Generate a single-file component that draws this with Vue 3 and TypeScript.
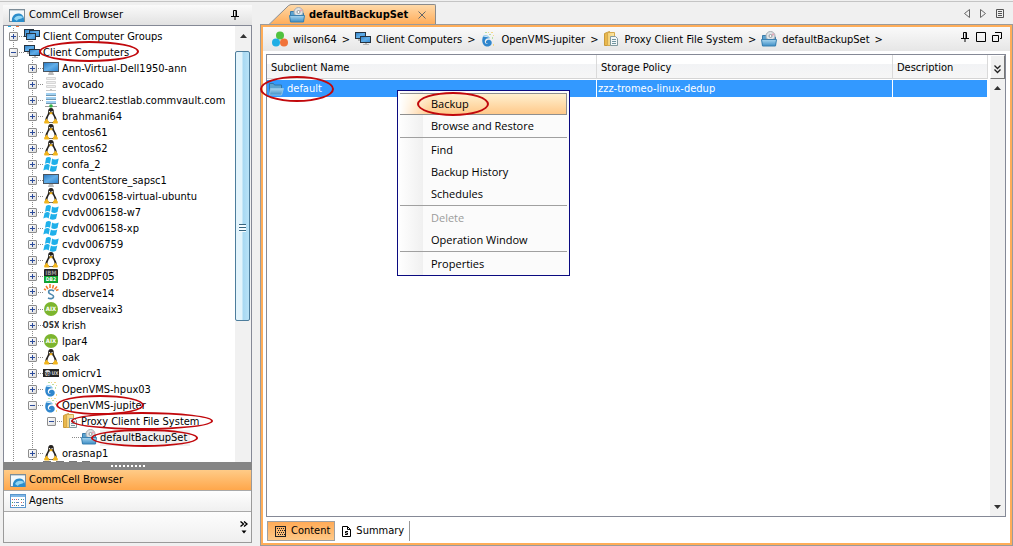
<script setup lang="ts">
import { computed, ref } from 'vue'

interface Ring {
  left: number
  top: number
  width: number
  height: number
}

interface TreeNode {
  label: string
  icon: string
  level: number
  expanded?: boolean
  leaf?: boolean
  tall?: boolean
  selected?: boolean
  ring?: Ring
}

interface BadgeText {
  text: string
  x: number
  y: number
  size: number
  fill: string
}

const nodes = ref<TreeNode[]>([
  { label: 'Client Computer Groups', icon: 'groups', level: 0 },
  { label: 'Client Computers', icon: 'computers', level: 0, expanded: true, ring: { left: 35, top: -3, width: 100, height: 21 } },
  { label: 'Ann-Virtual-Dell1950-ann', icon: 'monitor', level: 1 },
  { label: 'avocado', icon: 'server-off', level: 1 },
  { label: 'bluearc2.testlab.commvault.com', icon: 'server', level: 1 },
  { label: 'brahmani64', icon: 'linux', level: 1 },
  { label: 'centos61', icon: 'linux', level: 1 },
  { label: 'centos62', icon: 'linux', level: 1 },
  { label: 'confa_2', icon: 'windows', level: 1 },
  { label: 'ContentStore_sapsc1', icon: 'monitor', level: 1 },
  { label: 'cvdv006158-virtual-ubuntu', icon: 'linux', level: 1 },
  { label: 'cvdv006158-w7', icon: 'windows', level: 1 },
  { label: 'cvdv006158-xp', icon: 'windows', level: 1 },
  { label: 'cvdv006759', icon: 'windows', level: 1 },
  { label: 'cvproxy', icon: 'linux', level: 1 },
  { label: 'DB2DPF05', icon: 'db2', level: 1 },
  { label: 'dbserve14', icon: 'solaris', level: 1, tall: true },
  { label: 'dbserveaix3', icon: 'aix', level: 1 },
  { label: 'krish', icon: 'osx', level: 1 },
  { label: 'lpar4', icon: 'aix', level: 1 },
  { label: 'oak', icon: 'linux', level: 1 },
  { label: 'omicrv1', icon: 'hpux', level: 1 },
  { label: 'OpenVMS-hpux03', icon: 'openvms', level: 1 },
  { label: 'OpenVMS-jupiter', icon: 'openvms', level: 1, expanded: true, ring: { left: 52, top: -2, width: 88, height: 20 } },
  { label: 'Proxy Client File System', icon: 'folder-doc', level: 2, expanded: true, ring: { left: 67, top: -1, width: 142, height: 18 } },
  { label: 'defaultBackupSet', icon: 'backupset', level: 3, leaf: true, selected: true, ring: { left: 87, top: 0, width: 107, height: 18 } },
  { label: 'orasnap1', icon: 'linux', level: 1 },
])

const badgeTexts: Record<string, BadgeText[]> = {
  db2: [
    { text: 'IBM', x: 8, y: 7, size: 6, fill: '#999' },
    { text: 'DB2', x: 8, y: 13, size: 5, fill: '#fff' },
  ],
  aix: [{ text: 'AIX', x: 8, y: 10, size: 6, fill: '#fff' }],
  osx: [{ text: 'OSX', x: 8, y: 11, size: 8, fill: '#333' }],
  hpux: [
    { text: 'hp', x: 4, y: 10, size: 5, fill: '#222' },
    { text: 'UX', x: 12, y: 10, size: 5, fill: '#ccc' },
  ],
}

const visibleNodes = computed(() => {
  let hiddenBelow = Infinity
  return nodes.value.filter((node) => {
    if (node.level > hiddenBelow) return false
    hiddenBelow = node.expanded === false ? node.level : Infinity
    return true
  })
})

function toggle(node: TreeNode) {
  node.expanded = !node.expanded
}

const ringStyle = (ring: Ring) => ({
  left: `${ring.left}px`,
  top: `${ring.top}px`,
  width: `${ring.width}px`,
  height: `${ring.height}px`,
})

const crumbs = [
  { label: 'wilson64', icon: 'commcell' },
  { label: 'Client Computers', icon: 'computers' },
  { label: 'OpenVMS-jupiter', icon: 'openvms' },
  { label: 'Proxy Client File System', icon: 'folder-doc' },
  { label: 'defaultBackupSet', icon: 'backupset' },
]

const menuGroups = [
  [{ label: 'Backup', active: true }, { label: 'Browse and Restore' }],
  [{ label: 'Find' }, { label: 'Backup History' }, { label: 'Schedules' }],
  [{ label: 'Delete', disabled: true }, { label: 'Operation Window' }],
  [{ label: 'Properties' }],
] as { label: string; active?: boolean; disabled?: boolean }[][]
</script>

<template>
  <div class="app">
    <svg class="sprite" aria-hidden="true">
      <defs>
        <linearGradient id="screen" x1="0" y1="0" x2="1" y2="1">
          <stop offset="0" stop-color="#2c7cc4" />
          <stop offset="0.5" stop-color="#62aee8" />
          <stop offset="1" stop-color="#2f86d2" />
        </linearGradient>
        <linearGradient id="folder" x1="0" y1="0" x2="0" y2="1">
          <stop offset="0" stop-color="#a9d6ef" />
          <stop offset="1" stop-color="#3d8ec6" />
        </linearGradient>
        <linearGradient id="manila" x1="0" y1="0" x2="1" y2="0">
          <stop offset="0" stop-color="#f3cf74" />
          <stop offset="1" stop-color="#fbe7a8" />
        </linearGradient>
      </defs>
      <symbol id="groups" viewBox="0 0 16 16">
        <path d="M4 13h5v1H4z" fill="#aaa" />
        <rect x="0.5" y="1.5" width="9" height="7" fill="url(#screen)" stroke="#263340" />
        <rect x="5.5" y="2.5" width="10" height="6" fill="url(#screen)" stroke="#263340" />
        <rect x="2.5" y="5.5" width="9" height="6" fill="url(#screen)" stroke="#263340" />
      </symbol>
      <symbol id="computers" viewBox="0 0 16 16">
        <path d="M3 8h2v2H3zM10 12h2v1h2v1H8v-1h2z" fill="#b4b4b4" />
        <rect x="0.5" y="1.5" width="10" height="6" fill="url(#screen)" stroke="#263340" />
        <rect x="5.5" y="5.5" width="10" height="6" fill="url(#screen)" stroke="#263340" />
      </symbol>
      <symbol id="monitor" viewBox="0 0 16 16">
        <path d="M6 12h4l1 3H5z" fill="#b9b9b9" />
        <rect x="0" y="2" width="16" height="10" fill="#4a5560" />
        <rect x="1" y="3" width="14" height="8" fill="url(#screen)" />
      </symbol>
      <symbol id="server-off" viewBox="0 0 16 16">
        <path d="M3.5 1.5h9v2h-9zM3.5 5.5h9v2h-9zM3.5 9.5h9v2h-9z" fill="#eee" stroke="#d6d6d6" />
        <path d="M7 13h2v1h4v1H3v-1h4z" fill="#c6c6c6" />
      </symbol>
      <symbol id="server" viewBox="0 0 16 16">
        <path d="M3 1h10v2H3zM3 5h10v2H3zM3 9h10v2H3z" fill="#9fd0f2" />
        <path d="M3 3.5h10M3 7.5h10M3 11.5h10" stroke="#7396ad" />
        <path d="M2 14.5h12" stroke="#9a9a9a" />
        <circle cx="8" cy="14" r="1.8" fill="#35b44a" />
      </symbol>
      <symbol id="linux" viewBox="0 0 16 16">
        <path d="M8 0C5.600 0 5 1.700 5.200 4.200 5.200 6.400 2.300 9 2.200 12.500L4 15h8l1.800-2.500C13.700 9 10.800 6.500 10.800 4.200 11 1.700 10.300 0 8 0z" fill="#25221f" />
        <path d="M8 5c-1.500 1-3.700 4-3.700 7.500C5.500 15 10.500 15 11.700 12.500 11.700 9 9.500 6 8 5z" fill="#fff" />
        <path d="M6 3h1.200v1.300H6zM8.500 3h1.200v1.300H8.500z" fill="#eee" />
        <path d="M6 5l2-1 2 1-2 1.600zM1 14l2.500-3.500L6.300 14v1.600L1.500 15.500zM15 14l-2.500-3.500L9.700 14v1.600l4.800-.1z" fill="#f2b51c" />
      </symbol>
      <symbol id="windows" viewBox="0 0 16 16">
        <path d="M3 2C5 .7 6.600.8 8 2L7 7.700C5.300 6.600 3.800 6.700 2 7.700zM9 2.500c2 1.300 4 1.200 6.700 0l-1.200 5.500c-2.300 1.200-4.200 1.200-6.200 0zM1.600 9c2-1.200 3.500-1.200 5.200-.1L5.700 14.400c-1.500-1.100-3.200-1-5.400 0zM7.900 9.400c2 1.300 4 1.200 6.400.1l-1.200 5.300c-2.500 1.300-4.300 1.300-6.400.2z" fill="#1fb0ea" />
      </symbol>
      <symbol id="db2" viewBox="0 0 16 16">
        <rect x="1" y="1" width="14" height="14" rx="1" fill="#222" />
        <path d="M1 8h14v6l-1 1H2l-1-1z" fill="#0ea62f" />
      </symbol>
      <symbol id="solaris" viewBox="0 0 16 16">
        <path d="M1 5l2 1M3 2l2 3M7 0v4M10.500 1L9.500 4.500M14 2.500l-2.500 3M15.500 5.500l-2.500 1" stroke="#f07a2a" stroke-width="1.500" />
        <path d="M11 7C8 5 4.500 6.500 6 9c1 1.600 5 1.500 4.500 4-.5 2-3.500 2-5.500 1" fill="none" stroke="#4d87ad" stroke-width="1.600" />
      </symbol>
      <symbol id="aix" viewBox="0 0 16 16">
        <circle cx="8" cy="8" r="7" fill="#7cb52e" />
      </symbol>
      <symbol id="osx" viewBox="0 0 16 16"></symbol>
      <symbol id="hpux" viewBox="0 0 16 16">
        <rect x="0" y="4" width="16" height="8" fill="#222" />
        <circle cx="4.500" cy="8" r="3" fill="#ddd" />
      </symbol>
      <symbol id="openvms" viewBox="0 0 16 16">
        <path d="M3 5.500C1.500 9 2 14.500 6.500 15.500c4 .5 6-2.500 5-5C10.500 8 7 8 6 10.500c-.5 1.500 1 2.700 2.300 1.800C7 14 4.500 12.500 4.800 10 5.500 7 8.500 7 10 7.500 8 5.500 5 6 3 5.500z" fill="#2f86cd" />
        <path d="M3 5.500c2-1.500 5-1 6.500 1.500" fill="none" stroke="#6fc0ef" />
        <path d="M5 1h2v1H5zM9 3h2v1H9zM12 6h1v2h-1z" fill="#b9dfa0" />
        <path d="M8 1h1v1H8zM11 1h2v1h-2zM13 4h1v1h-1zM13 13h1v2h-1z" fill="#f3d98c" />
      </symbol>
      <symbol id="folder-doc" viewBox="0 0 16 16">
        <path d="M1.500 2.500l5-2v14h-5z" fill="#eab84c" stroke="#c89a3c" />
        <path d="M4.500 1.500h7v13h-7z" fill="url(#manila)" stroke="#d6aa4d" />
        <path d="M7.500 5.500h5l2 2v7h-7z" fill="#f3f7f8" stroke="#829aa0" />
        <path d="M9 8.500h4M9 10.500h4M9 12.500h4" stroke="#7195a0" />
      </symbol>
      <symbol id="backupset" viewBox="0 0 16 16">
        <path d="M1.500 14.500v-10h4l1 1.500h8v8z" fill="#5ba3d0" stroke="#3a7cab" />
        <circle cx="9.500" cy="5" r="4.500" fill="#dfe3e6" stroke="#a7adb2" />
        <path d="M9.500 5l2.500-3 1.500 2z" fill="#e9a6b6" />
        <circle cx="9.500" cy="5" r="1.500" fill="#fff" stroke="#929aa0" />
        <path d="M0.500 8.500h15l-1 6.500h-13z" fill="url(#folder)" stroke="#3a80b0" />
      </symbol>
      <symbol id="folder-blue" viewBox="0 0 16 16">
        <path d="M1.500 13.500v-11h4l1 1.500h7v9z" fill="#5ba3d0" stroke="#2f76a8" />
        <path d="M2.500 7.500h13l-2 6.500h-12z" fill="url(#folder)" stroke="#8cc5e8" />
      </symbol>
      <symbol id="commcell" viewBox="0 0 16 16">
        <circle cx="8" cy="4.500" r="4" fill="#52c23f" />
        <circle cx="4" cy="11.500" r="4" fill="#20aee5" />
        <circle cx="12" cy="11.500" r="4" fill="#f1733a" />
      </symbol>
      <symbol id="browser" viewBox="0 0 16 16">
        <rect x="0.500" y="2.500" width="15" height="12" fill="#f4f8fa" stroke="#7d8d98" />
        <path d="M1 3h14v1H1z" fill="#c5d3dc" />
        <path d="M3 15c-1-6 3-9 7-8.500 3.500.5 5.500 3 5 8.500z" fill="#2b8dcb" />
        <path d="M5 12c2-4 6-4 9-2-2 3-5 1-6 4z" fill="#92d6f3" />
      </symbol>
      <symbol id="agents" viewBox="0 0 16 16">
        <rect x="0.500" y="1.500" width="15" height="13" fill="#fff" stroke="#5a96cc" />
        <path d="M1 2h14v2H1z" fill="#7db6e6" />
        <path d="M2 6h1v1H2zM6 6h1v1H6zM11 9h1v1h-1zM2 12h1v1H2z" fill="#d4605a" />
        <path d="M2 9h1v1H2zM11 6h1v1h-1zM6 12h1v1H6z" fill="#479b50" />
        <path d="M4 6.500h1M8 6.500h1M13 6.500h1M4 9.500h1M6 9.500h3M13 9.500h1M4 12.500h1M8 12.500h1M11 12.500h3" stroke="#5c88bc" />
      </symbol>
      <symbol id="pin" viewBox="0 0 10 10">
        <path d="M3.500 6V0.500h3V6M6 1v5M1 6.500h8M5 7v3" fill="none" stroke="#000" />
      </symbol>
    </svg>

    <div class="topline"></div>

    <div class="workspace">
      <aside class="side">
        <header class="side-head">
          <svg class="icon"><use href="#browser" /></svg>
          <h2>CommCell Browser</h2>
          <button class="plain" aria-label="Pin panel"><svg class="glyph"><use href="#pin" /></svg></button>
        </header>

        <div class="tree-box">
          <div class="tree-pane">
            <div class="root-edge"><i class="cyan"></i><i class="coral"></i></div>
            <ul class="tree">
              <li
                v-for="node in visibleNodes"
                :key="node.label"
                :class="['row', 'level-' + node.level, { tall: node.tall, leaf: node.leaf }]"
              >
                <button
                  v-if="!node.leaf"
                  class="toggle"
                  :class="{ open: node.expanded }"
                  :aria-label="(node.expanded ? 'Collapse ' : 'Expand ') + node.label"
                  @click="toggle(node)"
                ></button>
                <span class="stem"></span>
                <svg class="icon">
                  <use :href="'#' + node.icon" />
                  <text
                    v-for="badge in badgeTexts[node.icon] ?? []"
                    :key="badge.text"
                    :x="badge.x"
                    :y="badge.y"
                    :font-size="badge.size"
                    :fill="badge.fill"
                    text-anchor="middle"
                    font-weight="700"
                  >{{ badge.text }}</text>
                </svg>
                <span class="label" :class="{ selected: node.selected }">{{ node.label }}</span>
                <span v-if="node.ring" class="ring" :style="ringStyle(node.ring)"></span>
              </li>
            </ul>
            <div class="next-row"></div>
          </div>
          <div class="scroll">
            <button class="arrow" aria-label="Scroll up">
              <svg viewBox="0 0 7 4"><path d="M0 4L3.500 0 7 4z" fill="#333" /></svg>
            </button>
            <div class="thumb"><span class="grip"></span></div>
          </div>
        </div>

        <div class="splitter"><span></span></div>

        <nav class="views">
          <button class="view current"><svg class="icon"><use href="#browser" /></svg>CommCell Browser</button>
          <button class="view"><svg class="icon"><use href="#agents" /></svg>Agents</button>
        </nav>
        <div class="more">
          <button class="plain" aria-label="More views">
            <svg width="8" height="13" viewBox="0 0 8 13">
              <path d="M0.500 0.500l3 2.500-3 2.500M4 0.500l3 2.500-3 2.500" fill="none" stroke="#000" stroke-width="1.400" />
              <path d="M1.500 9.500h5L4 12.500z" />
            </svg>
          </button>
        </div>
      </aside>

      <main class="main">
        <div class="tabs">
          <svg class="slope" viewBox="0 0 27 21">
            <defs>
              <linearGradient id="tab-fill" x1="0" y1="0" x2="0" y2="1">
                <stop offset="0" stop-color="#ffd9a8" />
                <stop offset="1" stop-color="#ffab57" />
              </linearGradient>
            </defs>
            <path d="M0 21h5L22 4q3-3.500 5-3.500V21z" fill="url(#tab-fill)" />
            <path d="M0 20.500h5L22 4q3-3.500 5-3.500" fill="none" stroke="#8b8b8b" />
          </svg>
          <div class="tab">
            <svg class="icon"><use href="#backupset" /></svg>
            <h1>defaultBackupSet</h1>
            <button class="plain" aria-label="Close tab">
              <svg width="8" height="8" viewBox="0 0 8 8"><path d="M0.500 0.500l7 7M7.500 0.500l-7 7" stroke="#666" /></svg>
            </button>
          </div>
          <div class="tab-tools">
            <button class="plain" aria-label="Previous tab">
              <svg width="6" height="9" viewBox="0 0 6 9"><path d="M5.500 0.500v8L0.500 4.500z" fill="none" stroke="#666" /></svg>
            </button>
            <button class="plain" aria-label="Next tab">
              <svg width="6" height="9" viewBox="0 0 6 9"><path d="M0.500 0.500v8l5-4z" fill="none" stroke="#666" /></svg>
            </button>
            <button class="plain" aria-label="Tab list">
              <svg width="8" height="9" viewBox="0 0 8 9"><path d="M0.500 0.500h7v8h-7zM2 2.500h4M2 4.500h4M2 6.500h4" fill="none" stroke="#555" /></svg>
            </button>
          </div>
        </div>

        <section class="panel">
          <nav class="crumbs" aria-label="Breadcrumb">
            <span v-for="crumb in crumbs" :key="crumb.label" class="crumb">
              <svg class="icon"><use :href="'#' + crumb.icon" /></svg>
              <a href="#">{{ crumb.label }}</a>
              <span class="gt">&gt;</span>
            </span>
            <span class="window-tools">
              <button class="plain" aria-label="Pin window"><svg class="glyph"><use href="#pin" /></svg></button>
              <button class="plain" aria-label="Maximize">
                <svg width="10" height="10" viewBox="0 0 10 10"><path d="M0.500 0.500h9v9h-9z" fill="none" stroke="#000" /></svg>
              </button>
              <button class="plain" aria-label="Restore">
                <svg width="10" height="10" viewBox="0 0 10 10"><path d="M0.500 3.500h6v6h-6zM3 0.500h6.500v6H8" fill="none" stroke="#000" /></svg>
              </button>
            </span>
          </nav>

          <div class="grid-box">
            <table>
              <colgroup><col class="c-name" /><col class="c-policy" /><col /></colgroup>
              <thead>
                <tr><th>Subclient Name</th><th>Storage Policy</th><th>Description</th></tr>
              </thead>
              <tbody>
                <tr>
                  <td>
                    <div class="name">
                      <svg class="icon"><use href="#folder-blue" /></svg>default
                      <span class="ring ring-default"></span>
                    </div>
                  </td>
                  <td>zzz-tromeo-linux-dedup</td>
                  <td></td>
                </tr>
              </tbody>
            </table>
            <div class="grid-scroll">
              <button class="columns" aria-label="Choose columns">
                <svg width="7" height="9" viewBox="0 0 7 9"><path d="M0.500 0.500l3 3 3-3M0.500 4.500l3 3 3-3" fill="none" stroke="#222" stroke-width="1.300" /></svg>
              </button>
              <button class="arrow" aria-label="Scroll list up">
                <svg viewBox="0 0 7 4"><path d="M0 4L3.500 0 7 4z" fill="#333" /></svg>
              </button>
              <button class="arrow last" aria-label="Scroll list down">
                <svg viewBox="0 0 7 4"><path d="M0 0h7L3.500 4z" fill="#333" /></svg>
              </button>
            </div>

            <div class="menu" role="menu">
              <div v-for="(group, index) in menuGroups" :key="index" class="menu-group" role="group">
                <button
                  v-for="item in group"
                  :key="item.label"
                  role="menuitem"
                  class="menu-item"
                  :class="{ active: item.active }"
                  :disabled="item.disabled"
                >
                  {{ item.label }}
                  <span v-if="item.active" class="ring ring-backup"></span>
                </button>
              </div>
            </div>
          </div>

          <footer class="pages">
            <button class="page current">
              <svg width="11" height="11" viewBox="0 0 11 11">
                <rect x="0.500" y="0.500" width="10" height="10" fill="none" stroke="#222" />
                <path d="M2 2.500h7M3 4.500h7M2 6.500h7M3 8.500h7" stroke="#222" stroke-dasharray="1 1" />
              </svg>Content
            </button>
            <button class="page">
              <svg width="9" height="11" viewBox="0 0 9 11">
                <path d="M0.500 0.500h5l3 3v7h-8zM5.500 0.500v3h3" fill="#fff" stroke="#000" />
                <path d="M6 5.500H3.500v1.500h2v1.500H3" fill="none" stroke="#000" />
              </svg>Summary
            </button>
          </footer>
        </section>
      </main>
    </div>
  </div>
</template>

<style>
body {
  margin: 0;
  background: #f0f0f0;
}
</style>

<style scoped>
.app {
  display: flex;
  flex-direction: column;
  height: 100vh;
  overflow: hidden;
  background: #f0f0f0;
  color: #000;
  font-family: 'DejaVu Sans Condensed', Tahoma, Roboto, sans-serif;
  font-size: 11px;
  line-height: 16px;
  white-space: nowrap;
}
.app * {
  box-sizing: border-box;
}
button {
  font: inherit;
  color: inherit;
  margin: 0;
  padding: 0;
  border: 0;
  background: none;
}
h1,
h2 {
  margin: 0;
  font: inherit;
}
a {
  color: inherit;
  text-decoration: none;
}
.sprite {
  position: absolute;
  width: 0;
  height: 0;
}
.icon {
  display: block;
  flex: none;
  width: 16px;
  height: 16px;
}
.glyph {
  width: 10px;
  height: 10px;
}
.plain {
  display: flex;
}
.plain svg {
  display: block;
}
.ring {
  position: absolute;
  z-index: 5;
  border: 2px solid #c1080c;
  border-radius: 50%;
  pointer-events: none;
}
.topline {
  flex: none;
  height: 4px;
  border-bottom: 2px solid #f0f0f0;
  background: linear-gradient(#f0f0f0 1px, #c4c4c4 1px);
}
.workspace {
  display: flex;
  flex: 1;
  min-height: 0;
  gap: 8px;
  padding-left: 3px;
}

/* navigation pane */
.side {
  display: flex;
  flex-direction: column;
  flex: none;
  width: 249px;
  padding: 1px 0 3px;
}
.side-head {
  display: flex;
  align-items: center;
  flex: none;
  gap: 4px;
  height: 20px;
  padding: 0 12px 0 6px;
  background: linear-gradient(#fafafa, #e2e2e2);
}
.side-head .plain {
  margin-left: auto;
}
.tree-box {
  display: flex;
  flex: 1;
  min-height: 0;
  border: 1px solid #858996;
  border-bottom: 0;
  background: #fff;
}
.tree-pane {
  flex: 1;
  overflow: hidden;
}
.root-edge {
  display: flex;
  gap: 5px;
  height: 2px;
  padding-left: 4px;
}
.root-edge i {
  width: 3px;
  height: 1px;
  background: #20aee5;
}
.root-edge .coral {
  background: #f1733a;
}
.tree {
  margin: 0;
  padding: 0;
  list-style: none;
  background: repeating-linear-gradient(#8a8a8a 0 1px, transparent 1px 2px) 9px 0 / 1px 100% no-repeat;
}
.next-row {
  width: 50px;
  height: 2px;
  margin-left: 39px;
  background: repeating-linear-gradient(90deg, #777 0 8px, transparent 8px 13px);
}
.row {
  position: relative;
  display: flex;
  align-items: center;
  height: 16px;
  padding-left: 5px;
}
.row.tall {
  height: 17px;
  align-items: flex-start;
}
.level-1,
.level-2,
.level-3 {
  padding-left: 24px;
  background: repeating-linear-gradient(#8a8a8a 0 1px, transparent 1px 2px) 28px 0 / 1px 100% no-repeat;
}
.level-2 {
  padding-left: 43px;
}
.level-3 {
  padding-left: 67px;
}
.toggle {
  flex: none;
  width: 9px;
  height: 9px;
  border: 1px solid #8d8d8d;
  border-radius: 1px;
  background:
    linear-gradient(#2b4b9b, #2b4b9b) center / 5px 1px no-repeat,
    linear-gradient(#2b4b9b, #2b4b9b) center / 1px 5px no-repeat,
    linear-gradient(135deg, #fff, #dcdcdc);
}
.toggle.open {
  background:
    linear-gradient(#2b4b9b, #2b4b9b) center / 5px 1px no-repeat,
    linear-gradient(135deg, #fff, #dcdcdc);
}
.row.tall .toggle {
  margin-top: 3px;
}
.stem {
  flex: none;
  width: 6px;
  height: 1px;
  background: repeating-linear-gradient(90deg, transparent 0 1px, #8a8a8a 1px 2px);
}
.row.tall .stem {
  margin-top: 8px;
}
.leaf .stem {
  width: 10px;
}
.label {
  margin-left: 3px;
  padding: 2px 3px 0 0;
}
.selected {
  background: linear-gradient(#f0f0f0, #f0f0f0) 0 2px no-repeat;
}
.scroll {
  flex: none;
  width: 16px;
  background: #f1f1f1;
}
.arrow {
  display: flex;
  align-items: center;
  justify-content: center;
  width: 100%;
  height: 18px;
}
.arrow svg {
  width: 7px;
  height: 4px;
}
.scroll .arrow {
  height: 25px;
  padding-bottom: 6px;
}
.thumb {
  display: flex;
  align-items: center;
  justify-content: center;
  width: 15px;
  height: 62%;
  border: 1px solid #4d7d9c;
  border-radius: 2px;
  background: linear-gradient(90deg, #e3f4fc 0 45%, #a8d8f2 55%, #b9e3f8);
}
.grip {
  width: 7px;
  height: 8px;
  margin-top: 84px;
  background: repeating-linear-gradient(#37647f 0 1px, #f4fbff 1px 3px);
}
.splitter {
  display: flex;
  align-items: center;
  justify-content: center;
  flex: none;
  height: 8px;
  background: #858585;
}
.splitter span {
  width: 34px;
  height: 2px;
  background: repeating-linear-gradient(90deg, #fff 0 2px, transparent 2px 4px);
}
.views {
  flex: none;
  border: solid #9a9a9a;
  border-width: 0 1px;
}
.view {
  display: flex;
  align-items: center;
  gap: 3px;
  width: 100%;
  height: 21px;
  padding-left: 6px;
  border-bottom: 1px solid #a9a9a9;
  background: linear-gradient(#fefefe, #f0f0f0);
}
.view.current {
  background: linear-gradient(#ffcb87, #ffa74b);
}
.more {
  display: flex;
  justify-content: flex-end;
  flex: none;
  height: 31px;
  padding: 9px 3px 0 0;
  border: solid #9a9a9a;
  border-width: 0 1px 1px;
  background: linear-gradient(#fdfdfd, #efefef);
}

/* document area */
.main {
  display: flex;
  flex-direction: column;
  flex: 1;
  min-width: 0;
}
.tabs {
  display: flex;
  align-items: stretch;
  flex: none;
  height: 21px;
  padding-left: 4px;
}
.slope {
  flex: none;
  width: 27px;
  height: 21px;
}
.tab {
  display: flex;
  align-items: center;
  padding-right: 9px;
  border: 1px solid #8b8b8b;
  border-width: 1px 1px 0 0;
  border-radius: 0 2px 0 0;
  background: linear-gradient(#ffd9a8, #ffab57);
}
.tab .icon {
  margin-left: -2px;
}
.tab h1 {
  margin: 0 10px 0 4px;
  font-weight: 700;
}
.tab-tools {
  display: flex;
  align-items: center;
  gap: 10px;
  margin-left: auto;
  padding: 0 9px 2px 0;
}
.panel {
  display: flex;
  flex-direction: column;
  flex: 1;
  min-height: 0;
  margin-top: -1px;
  padding: 0 4px 2px 3px;
  border: 3px solid #ffad58;
  outline: 1px solid #9b9b9b;
  outline-offset: -1px;
  background: #fff;
}
.crumbs {
  display: flex;
  align-items: center;
  flex: none;
  height: 24px;
  margin: 0 -4px 3px -3px;
  padding: 0 8px 0 9px;
  background: linear-gradient(#fafafa, #e6e6e6);
}
.crumb {
  display: flex;
  align-items: center;
}
.crumb a {
  margin: 0 5px;
  padding-top: 2px;
}
.gt {
  margin-right: 5px;
  padding-top: 2px;
}
.window-tools {
  display: flex;
  gap: 6px;
  margin-left: auto;
  padding-bottom: 4px;
}
.grid-box {
  position: relative;
  display: flex;
  align-items: flex-start;
  flex: 1;
  min-height: 0;
  border: 1px solid #858996;
}
table {
  flex: 1;
  min-width: 0;
  margin-right: 2px;
  border-collapse: separate;
  border-spacing: 0;
  table-layout: fixed;
}
.c-name {
  width: 330px;
}
.c-policy {
  width: 296px;
}
th {
  height: 24px;
  padding: 2px 4px 0;
  border-right: 1px solid #dadada;
  border-bottom: 1px solid #d5d5d5;
  background: linear-gradient(#fff 40%, #f2f3f5 40%, #f6f6f6);
  font-weight: 400;
  text-align: left;
}
td {
  height: 18px;
  padding: 0 0 0 1px;
  border-top: 1px solid #fff;
  border-right: 1px solid #fff;
  background: #3399ff;
  background-clip: padding-box;
  color: #fff;
}
.name {
  position: relative;
  display: flex;
  align-items: center;
  gap: 3px;
}
.ring-default {
  left: -8px;
  top: -5px;
  width: 74px;
  height: 26px;
}
.grid-scroll {
  display: flex;
  flex-direction: column;
  align-self: stretch;
  flex: none;
  width: 15px;
  background: #f1f1f1;
}
.columns {
  display: flex;
  align-items: center;
  justify-content: center;
  height: 24px;
  padding-top: 4px;
  border: 1px solid #fff;
  border-right-color: #777;
  border-bottom-color: #777;
  background: #f1f1f1;
}
.last {
  margin-top: auto;
}

/* context menu over the subclient list */
.menu {
  position: absolute;
  left: 130px;
  top: 35px;
  z-index: 2;
  width: 173px;
  padding: 2px 2px 0;
  border: 1px solid #0a0a80;
  background: linear-gradient(90deg, #fff, #f0f0f0 25px, #fbfbfb 25px);
  font-family: 'Open Sans', 'Noto Sans', sans-serif;
}
.menu-group + .menu-group {
  border-top: 1px solid #a0a0a0;
  padding-top: 1px;
}
.menu-item {
  position: relative;
  display: block;
  width: 100%;
  height: 22px;
  padding-left: 31px;
  text-align: left;
}
.menu-item:disabled {
  color: #9c9c9c;
}
.menu-item.active {
  border: 1px solid #8f8f8f;
  border-left: 0;
  background: linear-gradient(90deg, #fff, transparent 30px), linear-gradient(#fff0cf, #ffc98a);
}
.ring-backup {
  left: 17px;
  top: -2px;
  width: 72px;
  height: 24px;
}

.pages {
  display: flex;
  flex: none;
  padding-top: 4px;
}
.page {
  display: flex;
  align-items: center;
  gap: 5px;
  height: 20px;
  padding: 0 5px 0 7px;
  border-right: 1px solid #999;
}
.page.current {
  margin-left: 1px;
  padding: 0 4px 0 7px;
  border: 1px solid #a0a0a0;
  background: linear-gradient(#ffab57, #ffc988);
}
</style>
